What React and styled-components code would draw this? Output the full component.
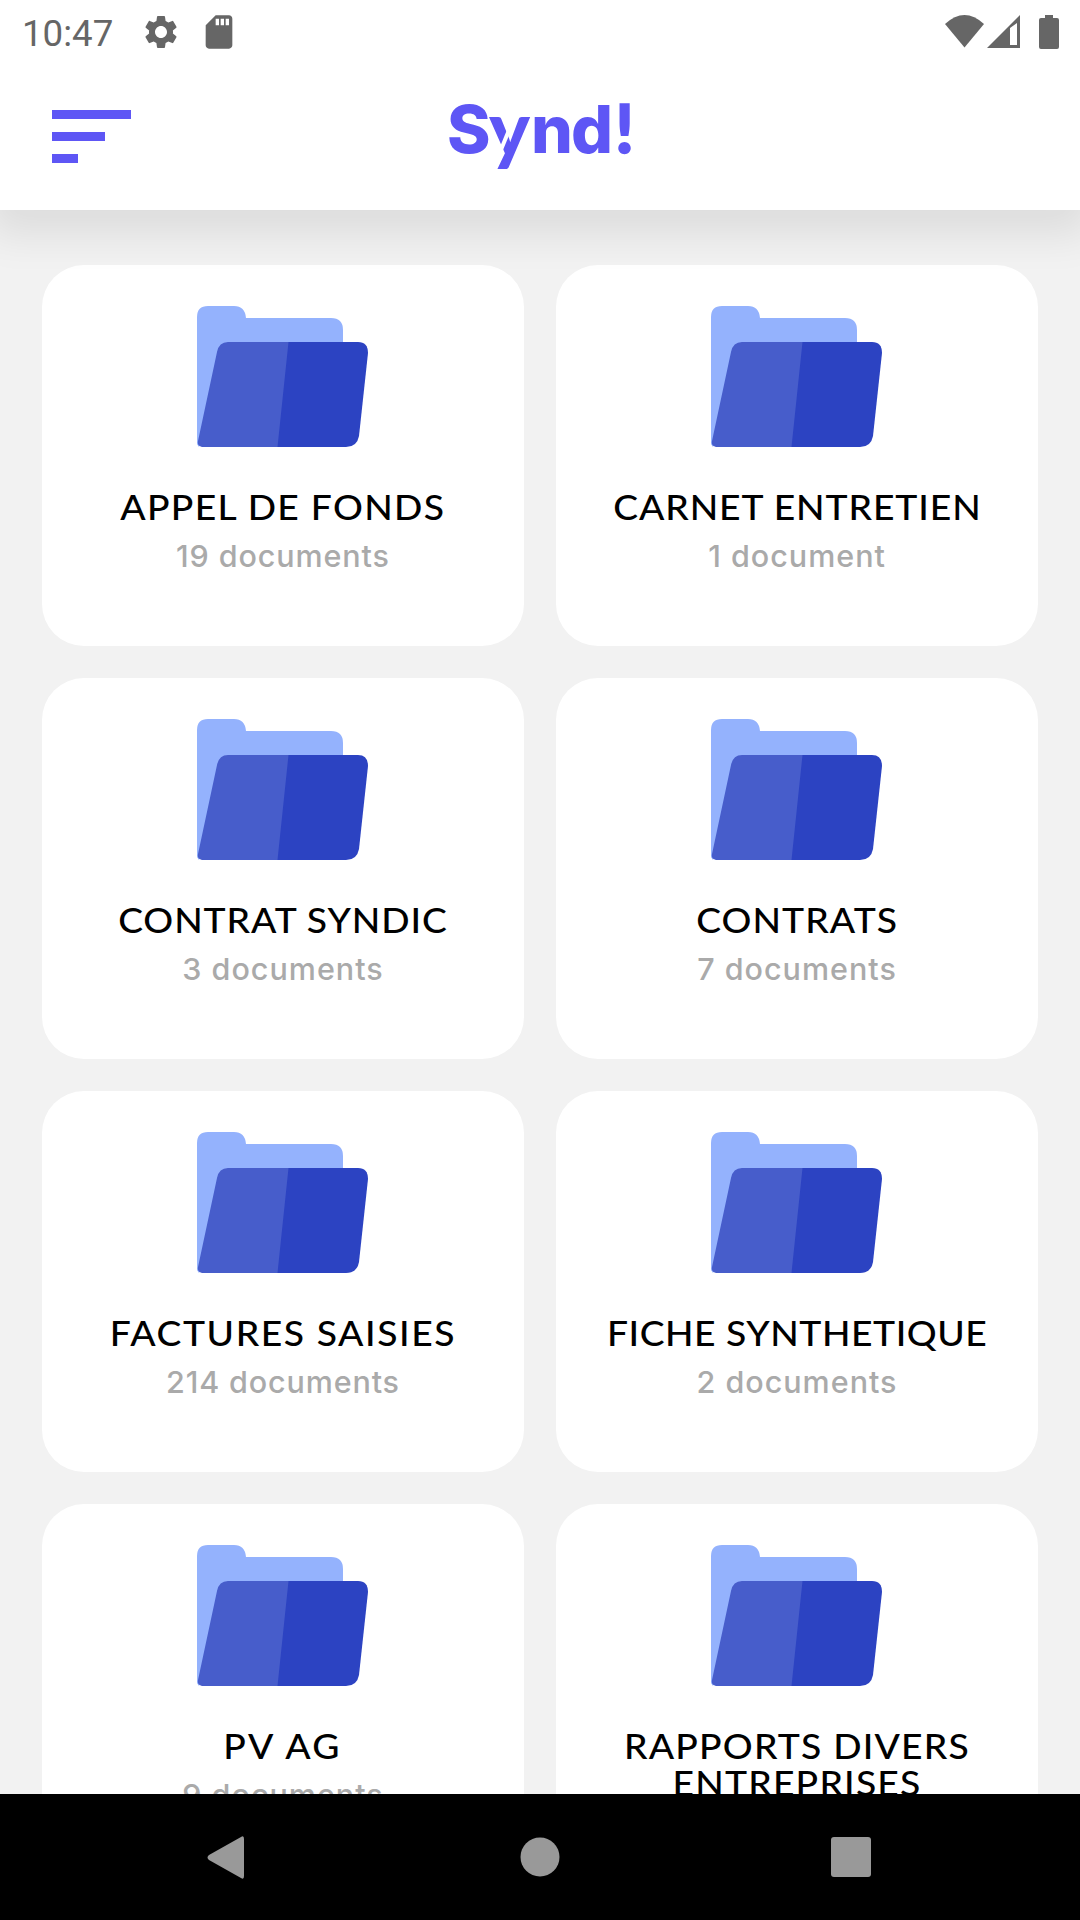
import React from 'react';
import styled, { createGlobalStyle } from 'styled-components';
import { MdSettings, MdSdCard } from 'react-icons/md';

const folders = [
  { name: 'APPEL DE FONDS', count: '19 documents', spacing: 1.25, countSpacing: 0.9 },
  { name: 'CARNET ENTRETIEN', count: '1 document', spacing: 0.85, countSpacing: 1 },
  { name: 'CONTRAT SYNDIC', count: '3 documents', spacing: 0.85, countSpacing: 1 },
  { name: 'CONTRATS', count: '7 documents', spacing: 1, countSpacing: 1 },
  { name: 'FACTURES SAISIES', count: '214 documents', spacing: 1.5, countSpacing: 0.85 },
  { name: 'FICHE SYNTHETIQUE', count: '2 documents', spacing: 0.5, countSpacing: 1 },
  { name: 'PV AG', count: '9 documents', spacing: 2.4, countSpacing: 1 },
  { name: 'RAPPORTS DIVERS ENTREPRISES', count: '4 documents', spacing: 1.15, countSpacing: 1 }
];

const FolderIcon = () => (
  <svg width="172" height="141" viewBox="0 0 172 141">
    <path
      fill="#94b2fd"
      d="M0 138V11Q0 0 11 0H37Q48 0 49 12H134Q146 12 146 24V60L20 100L2 141Z"
    />
    <path
      fill="#2c43c2"
      d="M80 36H161Q171 36 171 47L162 130Q160 141 149 141H70Z"
    />
    <path
      fill="#475dcb"
      d="M20 46Q22 36 31 36H91.500L80.500 141H5Q0 140 1 135Z"
    />
  </svg>
);

const Logo = () => (
  <LogoSvg width="200" height="90" viewBox="440 90 200 90">
    <text x="447" y="153">S</text>
    <LogoHumanist x="489" y="156" $size={77}>y</LogoHumanist>
    <text x="531" y="153">n</text>
    <text x="571" y="153">d</text>
    <LogoHumanist x="615" y="153" $size={67} $bold>!</LogoHumanist>
    <path d="M511.500 124L498 157" stroke="#fff" strokeWidth="4" />
  </LogoSvg>
);

const App = () => {
  return (
    <>
      <GlobalStyle />
      <Screen>
        <Header>
          <StatusBar>
            <Clock>10:47</Clock>
            <MdSettings size={40} />
            <MdSdCard size={40} />
            <Signals width="116" height="36" viewBox="944 13 116 36">
              <path d="M945 23Q964.500 5 984 23L964.500 46.500Z" />
              <path
                fillRule="evenodd"
                d="M1020 14V47H987ZM1010 27V44H1017V22Z"
              />
              <path d="M1045 14H1053V17H1057Q1059 17 1059 19V46Q1059 48 1057 48H1041Q1039 48 1039 46V19Q1039 17 1041 17H1045Z" />
            </Signals>
          </StatusBar>
          <TitleBar>
            <Menu>
              <MenuLine $width={79} />
              <MenuLine $width={53} />
              <MenuLine $width={26} />
            </Menu>
            <Logo />
          </TitleBar>
        </Header>

        <Content>
          {folders.map((folder) => (
            <Card key={folder.name}>
              <FolderIcon />
              <Name $spacing={folder.spacing}>{folder.name}</Name>
              <Count $spacing={folder.countSpacing}>{folder.count}</Count>
            </Card>
          ))}
        </Content>

        <NavBar>
          <svg width="38" height="43" viewBox="0 0 38 43">
            <path d="M34 1Q37 -1 37 3V40Q37 44 34 42L2 24Q-1 21.500 2 19Z" />
          </svg>
          <svg width="40" height="40" viewBox="0 0 40 40">
            <circle cx="20" cy="20" r="19.500" />
          </svg>
          <svg width="40" height="40" viewBox="0 0 40 40">
            <rect width="40" height="40" rx="3" />
          </svg>
        </NavBar>
      </Screen>
    </>
  );
};

const GlobalStyle = createGlobalStyle`
  body {
    margin: 0;
    background: #f2f2f2;
  }
`;

const Screen = styled.div`
  display: flex;
  flex-direction: column;
  width: 1080px;
  height: 1920px;
  overflow: hidden;
  background: #f2f2f2;
`;

const Header = styled.header`
  flex: none;
  height: 210px;
  position: relative;
  background: #fff;
  box-shadow: 0 12px 40px 12px rgba(0, 0, 0, 0.09);
`;

const StatusBar = styled.div`
  display: flex;
  align-items: center;
  height: 63px;
  padding: 0 20px 0 22px;
  box-sizing: border-box;
  color: #666;

  svg {
    fill: #666;
  }
`;

const Clock = styled.span`
  width: 119px;
  font-family: Roboto, sans-serif;
  font-size: 36.7px;
  line-height: 63px;
  padding-top: 3px;

  & + svg + svg {
    margin-left: 18px;
  }
`;

const Signals = styled.svg`
  margin-left: auto;
`;

const TitleBar = styled.div`
  display: grid;
  grid-template-columns: 388px 200px;
  padding: 27px 0 0 52px;
`;

const Menu = styled.div`
  display: flex;
  flex-direction: column;
  gap: 13px;
  padding-top: 20px;
`;

const MenuLine = styled.div`
  width: ${({ $width }) => $width}px;
  height: 9px;
  background: #5e56f5;
`;

const LogoSvg = styled.svg`
  overflow: visible;
  fill: #5e56f5;
  font-family: Inter, sans-serif;
  font-size: 66px;
  font-weight: 800;
`;

const LogoHumanist = styled.text`
  font-family: Lato, sans-serif;
  font-size: ${({ $size }) => $size}px;
  font-weight: 900;
  stroke: #5e56f5;
  stroke-width: ${({ $bold }) => ($bold ? 1.5 : 0)}px;
`;

const Content = styled.main`
  flex: 1;
  min-height: 0;
  overflow: hidden;
  display: grid;
  grid-template-columns: 482px 482px;
  grid-auto-rows: 381px;
  gap: 32px;
  padding: 55px 42px 0;
`;

const Card = styled.div`
  display: flex;
  flex-direction: column;
  align-items: center;
  padding: 41px 40px 0;
  border-radius: 42px;
  background: #fff;

  svg {
    flex: none;
  }
`;

const Name = styled.div`
  margin-top: 41px;
  font-family: Lato, sans-serif;
  font-size: 35.5px;
  font-weight: 500;
  line-height: 37px;
  letter-spacing: ${({ $spacing }) => $spacing}px;
  transform: scaleX(1.05);
  text-align: center;
  color: #000;
`;

const Count = styled.div`
  margin-top: 11px;
  font-family: Inter, sans-serif;
  font-size: 30.5px;
  font-weight: 500;
  line-height: 40px;
  letter-spacing: ${({ $spacing }) => $spacing}px;
  white-space: nowrap;
  color: #aaa;
`;

const NavBar = styled.nav`
  flex: none;
  display: grid;
  grid-template-columns: 313px 311px 40px;
  align-items: center;
  height: 126px;
  padding-left: 207px;
  position: relative;
  background: #000;

  svg {
    fill: #999;
  }
`;

export default App;
